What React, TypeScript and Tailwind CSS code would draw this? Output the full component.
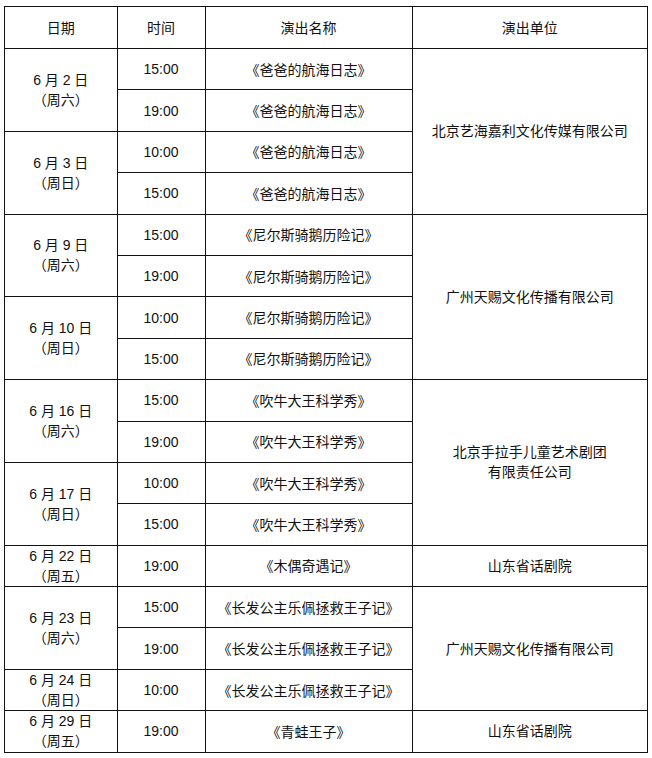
import React from "react";

type Row = { date?: { d: string; w: string; span: number }; time: string; title: string; org?: { lines: string[]; span: number } };

const rows: Row[] = [
  { date: { d: "6 月 2 日", w: "（周六）", span: 2 }, time: "15:00", title: "《爸爸的航海日志》", org: { lines: ["北京艺海嘉利文化传媒有限公司"], span: 4 } },
  { time: "19:00", title: "《爸爸的航海日志》" },
  { date: { d: "6 月 3 日", w: "（周日）", span: 2 }, time: "10:00", title: "《爸爸的航海日志》" },
  { time: "15:00", title: "《爸爸的航海日志》" },
  { date: { d: "6 月 9 日", w: "（周六）", span: 2 }, time: "15:00", title: "《尼尔斯骑鹅历险记》", org: { lines: ["广州天赐文化传播有限公司"], span: 4 } },
  { time: "19:00", title: "《尼尔斯骑鹅历险记》" },
  { date: { d: "6 月 10 日", w: "（周日）", span: 2 }, time: "10:00", title: "《尼尔斯骑鹅历险记》" },
  { time: "15:00", title: "《尼尔斯骑鹅历险记》" },
  { date: { d: "6 月 16 日", w: "（周六）", span: 2 }, time: "15:00", title: "《吹牛大王科学秀》", org: { lines: ["北京手拉手儿童艺术剧团", "有限责任公司"], span: 4 } },
  { time: "19:00", title: "《吹牛大王科学秀》" },
  { date: { d: "6 月 17 日", w: "（周日）", span: 2 }, time: "10:00", title: "《吹牛大王科学秀》" },
  { time: "15:00", title: "《吹牛大王科学秀》" },
  { date: { d: "6 月 22 日", w: "（周五）", span: 1 }, time: "19:00", title: "《木偶奇遇记》", org: { lines: ["山东省话剧院"], span: 1 } },
  { date: { d: "6 月 23 日", w: "（周六）", span: 2 }, time: "15:00", title: "《长发公主乐佩拯救王子记》", org: { lines: ["广州天赐文化传播有限公司"], span: 3 } },
  { time: "19:00", title: "《长发公主乐佩拯救王子记》" },
  { date: { d: "6 月 24 日", w: "（周日）", span: 1 }, time: "10:00", title: "《长发公主乐佩拯救王子记》" },
  { date: { d: "6 月 29 日", w: "（周五）", span: 1 }, time: "19:00", title: "《青蛙王子》", org: { lines: ["山东省话剧院"], span: 1 } },
];

const cell = "border border-[#111] text-center align-middle p-0";
const cjk = "[font-family:'Noto_Sans_CJK_SC',sans-serif] [font-feature-settings:'chws'_0,'halt'_0] [text-spacing-trim:space-all]";

export default function App() {
  return (
    <div className="w-[652px] h-[758px] bg-white pl-[4px] pt-[6px]" style={{ fontFamily: '"Liberation Sans", "Noto Sans CJK SC", sans-serif' }}>
      <table className="table-fixed border-collapse w-[643px] text-[14px] text-[#111] leading-[20px]">
        <colgroup>
          <col className="w-[112.5px]" />
          <col className="w-[88px]" />
          <col className="w-[207px]" />
          <col className="w-[235.5px]" />
        </colgroup>
        <thead>
          <tr className="h-[42px]">
            <th className={cell + " font-normal"}>日期</th>
            <th className={cell + " font-normal"}>时间</th>
            <th className={cell + " font-normal"}>演出名称</th>
            <th className={cell + " font-normal"}>演出单位</th>
          </tr>
        </thead>
        <tbody>
          {rows.map((r, i) => (
            <tr key={i} className="h-[41.4px]">
              {r.date && (
                <td rowSpan={r.date.span} className={cell}>
                  <div className="flex flex-col items-center leading-[19px]">
                    <span className="whitespace-pre">{r.date.d}</span>
                    <span className={cjk}>{r.date.w}</span>
                  </div>
                </td>
              )}
              <td className={cell}>{r.time}</td>
              <td className={cell}>
                <span className={cjk}>{r.title}</span>
              </td>
              {r.org && (
                <td rowSpan={r.org.span} className={cell}>
                  <div className="flex flex-col items-center leading-[20px]">
                    {r.org.lines.map((l) => (
                      <span key={l}>{l}</span>
                    ))}
                  </div>
                </td>
              )}
            </tr>
          ))}
        </tbody>
      </table>
    </div>
  );
}
